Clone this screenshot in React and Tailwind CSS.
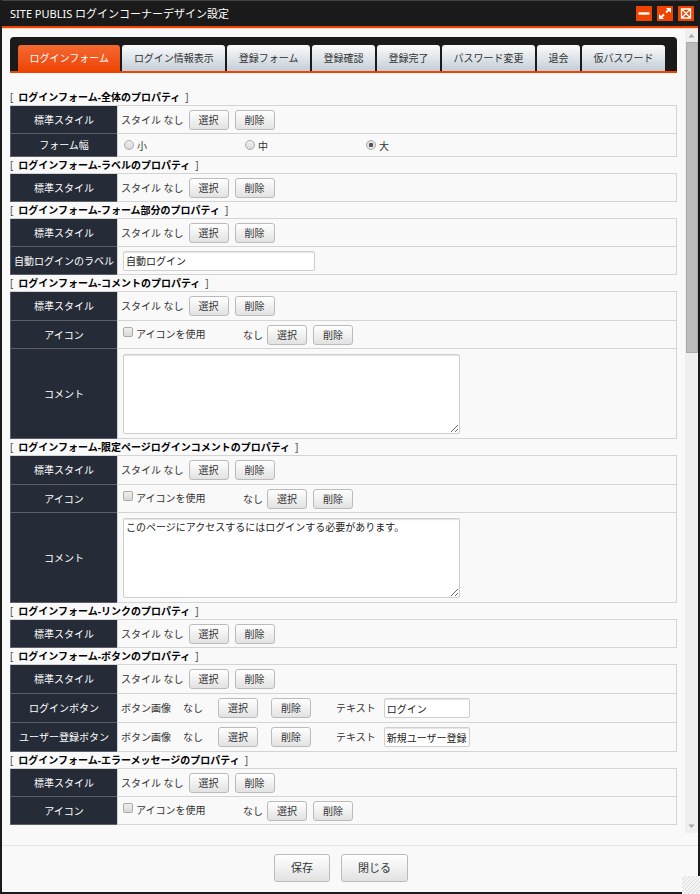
import { useState } from 'react'

const TABS = ['ログインフォーム', 'ログイン情報表示', '登録フォーム', '登録確認', '登録完了', 'パスワード変更', '退会', '仮パスワード']

const FIELD = 'rounded-xs border border-[#cfcfcf] bg-white text-[10px] text-[#222] shadow-[inset_0_1px_1px_#e4e4e4] outline-none'

function SmallButton({ children }) {
  return (
    <button
      type="button"
      className="h-5 w-10 shrink-0 rounded-[3px] border border-[#bbb] bg-linear-to-b from-white to-[#e2e2e2] text-[10px] leading-4 text-[#333]"
    >
      {children}
    </button>
  )
}

function Section({ title, children }) {
  return (
    <section>
      <h2 className="h-4 whitespace-nowrap text-[10px] leading-4 font-bold text-black">
        <span className="font-normal text-[#555]">[</span>
        <span className="mx-[5px]">{title}</span>
        <span className="font-normal text-[#555]">]</span>
      </h2>
      <div className="border-t border-r border-[#d4d4d4]">{children}</div>
    </section>
  )
}

function Row({ label, htmlFor, size = 'h-7', children }) {
  const Label = htmlFor ? 'label' : 'div'
  return (
    <div className={`flex ${size}`}>
      <Label
        htmlFor={htmlFor}
        className="flex w-[107px] shrink-0 items-center justify-center border-b border-l border-[#5c6066] bg-[#262c37] text-white"
      >
        {label}
      </Label>
      <div className="flex min-w-0 flex-1 items-center border-b border-l border-[#d4d4d4] pl-[3px]">{children}</div>
    </div>
  )
}

function StyleRow({ size }) {
  return (
    <Row label="標準スタイル" size={size}>
      <span className="mr-[5px]">スタイル なし</span>
      <div className="flex gap-[6px]">
        <SmallButton>選択</SmallButton>
        <SmallButton>削除</SmallButton>
      </div>
    </Row>
  )
}

function IconRow() {
  return (
    <Row label="アイコン">
      <label className="flex w-[122px] items-center gap-[3px] pb-[2px] pl-[2px]">
        <input
          type="checkbox"
          className="mb-1 size-[10px] appearance-none rounded-xs border border-[#aaa] bg-linear-to-b from-[#f0f0f0] to-[#d8d8d8] checked:bg-[#666]"
        />
        アイコンを使用
      </label>
      <span className="mr-1">なし</span>
      <div className="flex gap-[6px]">
        <SmallButton>選択</SmallButton>
        <SmallButton>削除</SmallButton>
      </div>
    </Row>
  )
}

function CommentRow({ id, value }) {
  return (
    <Row label="コメント" htmlFor={id} size="h-[90px]">
      <textarea
        id={id}
        defaultValue={value}
        className={`ml-[2px] h-20 w-[337px] resize px-[2px] leading-4 ${FIELD}`}
      />
    </Row>
  )
}

function ButtonRow({ id, label, value }) {
  return (
    <Row label={label} size="h-[29px]">
      <span className="mr-3">ボタン画像</span>
      <span className="mr-[15px]">なし</span>
      <div className="mr-[25px] flex gap-[13px]">
        <SmallButton>選択</SmallButton>
        <SmallButton>削除</SmallButton>
      </div>
      <label htmlFor={id} className="mr-2">テキスト</label>
      <input id={id} type="text" defaultValue={value} className={`h-5 w-[86px] px-[2px] ${FIELD}`} />
    </Row>
  )
}

function WidthRow() {
  const [width, setWidth] = useState('大')
  return (
    <Row label="フォーム幅" size="h-[23px]">
      {['小', '中', '大'].map(w => (
        <label key={w} className="flex w-[121px] items-center gap-[3px] pl-[3px]">
          <input
            type="radio"
            name="form-width"
            checked={width === w}
            onChange={() => setWidth(w)}
            className="size-[10px] appearance-none rounded-full border border-[#aaa] bg-linear-to-b from-[#f0f0f0] to-[#d8d8d8] checked:bg-[radial-gradient(circle,#555_35%,#e4e4e4_45%)]"
          />
          <span className="pt-[2px]">{w}</span>
        </label>
      ))}
    </Row>
  )
}

function WindowButton({ label, children }) {
  return (
    <button type="button" aria-label={label} className="h-[15px] w-4 bg-[#ee4400]">
      <svg viewBox="0 0 16 15" className="block h-[15px] w-4" fill="none" stroke="white">
        {children}
      </svg>
    </button>
  )
}

export default function App() {
  const [tab, setTab] = useState(TABS[0])

  return (
    <div className="relative flex min-h-screen flex-col border-x-2 border-b-2 border-[#1a1a1a] bg-[#f9f9f9] font-['Noto_Sans','Noto_Sans_CJK_JP',sans-serif] text-[10px] leading-4 text-[#333]">
      <header className="flex h-[28px] items-center justify-between border-t border-b-2 border-t-[#444] border-b-[#ee4400] bg-[#1a1a1a] pr-1 pl-2">
        <h1 className="text-[11px] text-white">SITE PUBLIS ログインコーナーデザイン設定</h1>
        <div className="flex gap-[5px]">
          <WindowButton label="最小化">
            <path d="M2.5 7.5h11" strokeWidth="2.4" />
          </WindowButton>
          <WindowButton label="最大化">
            <path d="M9 6.5L12.500 3M7 8.500L3.500 12" strokeWidth="1.800" />
            <path d="M9 2h5v5zM2 8v5h5z" fill="white" stroke="none" />
          </WindowButton>
          <WindowButton label="閉じる">
            <path d="M3.500 3h9v9h-9zM3.500 3l9 9M12.500 3l-9 9" strokeWidth="1.300" />
          </WindowButton>
        </div>
      </header>

      <div className="flex flex-1 border-t border-[#fbd5c6]">
        <main className="min-w-0 flex-1 px-2 pt-2 pb-5">
          <nav role="tablist" className="mb-4 flex gap-[2px] rounded-t border-b-2 border-[#ee4400] bg-[#1a1a1a] pt-2 pr-3 pl-2">
            {TABS.map(name => (
              <button
                key={name}
                type="button"
                role="tab"
                aria-selected={tab === name}
                onClick={() => setTab(name)}
                className={`h-[26px] flex-auto rounded-t-[3px] px-[10px] whitespace-nowrap ${
                  tab === name
                    ? 'bg-linear-to-b from-[#f4682f] to-[#ee4400] text-white'
                    : 'bg-linear-to-b from-[#fbfcfc] to-[#c3ced8] text-[#333]'
                }`}
              >
                {name}
              </button>
            ))}
          </nav>

          <Section title="ログインフォーム-全体のプロパティ">
            <StyleRow />
            <WidthRow />
          </Section>
          <Section title="ログインフォーム-ラベルのプロパティ">
            <StyleRow />
          </Section>
          <Section title="ログインフォーム-フォーム部分のプロパティ">
            <StyleRow />
            <Row label="自動ログインのラベル" htmlFor="auto-login">
              <input id="auto-login" type="text" defaultValue="自動ログイン" className={`ml-[2px] h-5 w-48 px-[2px] ${FIELD}`} />
            </Row>
          </Section>
          <Section title="ログインフォーム-コメントのプロパティ">
            <StyleRow size="h-[29px]" />
            <IconRow />
            <CommentRow id="comment" value="" />
          </Section>
          <Section title="ログインフォーム-限定ページログインコメントのプロパティ">
            <StyleRow size="h-[29px]" />
            <IconRow />
            <CommentRow id="limited-comment" value="このページにアクセスするにはログインする必要があります。" />
          </Section>
          <Section title="ログインフォーム-リンクのプロパティ">
            <StyleRow />
          </Section>
          <Section title="ログインフォーム-ボタンのプロパティ">
            <StyleRow size="h-[29px]" />
            <ButtonRow id="login-text" label="ログインボタン" value="ログイン" />
            <ButtonRow id="register-text" label="ユーザー登録ボタン" value="新規ユーザー登録" />
          </Section>
          <Section title="ログインフォーム-エラーメッセージのプロパティ">
            <StyleRow />
            <IconRow />
          </Section>
        </main>

        {/* scroll bar */}
        <div className="mb-3 flex w-[13px] shrink-0 flex-col bg-[#efefef]">
          <svg viewBox="0 0 13 13" className="h-[13px] w-[13px]">
            <path d="M3.500 8.500L6.500 5l3 3.500z" fill="#a5a5a5" />
          </svg>
          <div className="flex-1 pl-px">
            <div className="h-2/5 border border-[#aaa] bg-[#bcbcbc]" />
          </div>
          <svg viewBox="0 0 13 13" className="h-[13px] w-[13px]">
            <path d="M3.500 4.500L6.500 8l3-3.500z" fill="#a5a5a5" />
          </svg>
        </div>
      </div>

      <footer className="flex justify-center gap-[11px] border-t border-[#e4e4e4] pt-2 pr-[18px] pb-[10px]">
        {['保存', '閉じる'].map(name => (
          <button
            key={name}
            type="button"
            className="h-7 rounded-[3px] border border-[#bbb] bg-linear-to-b from-white to-[#e2e2e2] px-4 text-[11px] text-[#333]"
          >
            {name}
          </button>
        ))}
      </footer>

      {/* resize grip */}
      <svg viewBox="0 0 18 18" className="absolute -right-[2px] -bottom-[2px] size-[18px]">
        <path d="M0 0h18v18H0z" fill="#f4f4f4" />
        <path d="M0 4l4-4M0 8l8-8M0 12L12 0M0 16L16 0M2 18L18 2M6 18L18 6M10 18l8-8M14 18l4-4" stroke="#dadada" />
      </svg>
    </div>
  )
}
